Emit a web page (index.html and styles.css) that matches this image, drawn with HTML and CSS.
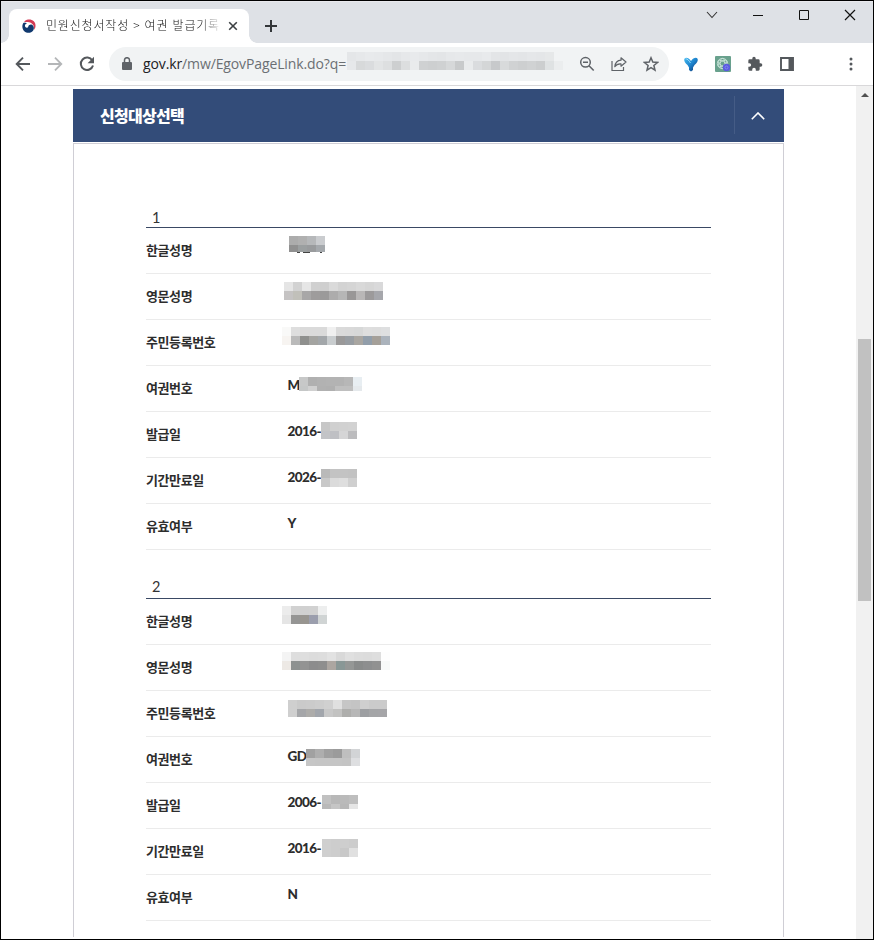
FILE: index.html
```
<!DOCTYPE html>
<html lang="ko">
<head>
<meta charset="utf-8">
<title>민원신청서작성</title>
<link rel="stylesheet" href="styles.css">
</head>
<body>
<div class="window">
  <header class="tabstrip">
    <div class="tab">
      <svg class="favicon" width="14" height="14" viewBox="0 0 14 14"><path d="M3 1.800C5.500-.2 9.500-.1 11.800 2.300c2.300 2.400 2.200 6.200.3 8.400C12.600 7 10.500 3.800 7 3.200 5.500 3 4 3 2 3.200Z" fill="#d23b56"/><path d="M1.600 3.700C-.3 6 0 10 2.300 12.200c2.700 2.400 7 2 8.900-.7 1.200-2 .8-4.600-1-5.600-1.700-.9-3.400.1-3.900 1.500-.4 1.200-1.700 1.700-2.700.8C2.300 7 3 5 5 4.200 3.800 3.700 2.600 3.600 1.600 3.700Z" fill="#10396e"/></svg>
      <span class="tab-title">민원신청서작성 &gt; 여권 발급기록</span>
      <svg class="tab-close" width="10" height="10" viewBox="0 0 10 10"><path d="M1.200 1.200l7.600 7.600M8.800 1.200L1.200 8.800" stroke="#3c4043" stroke-width="1.600"/></svg>
    </div>
    <svg class="new-tab" width="14" height="14" viewBox="0 0 14 14"><path d="M7 1v12M1 7h12" stroke="#333639" stroke-width="2"/></svg>
    <div class="controls">
      <svg width="12" height="12" viewBox="0 0 12 12"><path d="M1 3l5 5.500L11 3" fill="none" stroke="#333" stroke-width="1.100"/></svg>
      <svg width="12" height="12" viewBox="0 0 12 12"><path d="M1 6.500h10" stroke="#111" stroke-width="1"/></svg>
      <svg width="12" height="12" viewBox="0 0 12 12"><path d="M1.500 1.500h9v9h-9z" fill="none" stroke="#111"/></svg>
      <svg width="12" height="12" viewBox="0 0 12 12"><path d="M1 1l10 10M11 1L1 11" stroke="#111" stroke-width="1.200"/></svg>
    </div>
  </header>
  <div class="toolbar">
    <div class="nav">
      <svg width="16" height="16" viewBox="0 0 16 16"><path d="M15 8H2M8 1.700L1.700 8 8 14.300" fill="none" stroke="#54585c" stroke-width="1.900"/></svg>
      <svg width="16" height="16" viewBox="0 0 16 16"><path d="M1 8h13M8 1.700L14.300 8 8 14.300" fill="none" stroke="#b4b6b8" stroke-width="1.800"/></svg>
      <svg width="16" height="16" viewBox="0 0 16 16"><path d="M13.300 4.500A6.200 6.200 0 1 0 14 9.500" fill="none" stroke="#54585c" stroke-width="2"/><path d="M15 .8v6.400H8.600z" fill="#54585c"/></svg>
    </div>
    <div class="omnibox">
      <svg class="lock" width="10" height="13" viewBox="0 0 10 13"><path d="M1 5h8a1 1 0 0 1 1 1v6a1 1 0 0 1-1 1H1a1 1 0 0 1-1-1V6a1 1 0 0 1 1-1Z" fill="#5f6368"/><path d="M2.500 5.500V3a2.500 2.300 0 0 1 5 0v2.500" fill="none" stroke="#5f6368" stroke-width="1.500"/></svg>
      <span class="url"><b>gov.kr</b>/mw/EgovPageLink.do?q=</span>
      <div class="mosaic" data-rows="e4e6e8 e6e8ea e8eaec e7e9eb e5e7e9 e3e5e7 e6e8ea e8eaec e6e8ea e4e6e8 e3e5e7 e6e8ea e7e9eb e6e8ea e6e8ea e8eaec e3e5e7 e2e4e6 e4e6e8 e3e5e7 e5e7e9 e4e6e8 e6e8e9 f1f3f4|e6e8ea d7d9da dadcde e2e4e5 dddfe0 cdcfd0 dcdedf e9ebec cfd1d2 cdcfd0 cfd1d2 d6d8d9 c8cacb e9ebec dadcde d4d6d7 c7c9cb d8dadb d0d2d3 cdcfd0 d0d2d3 cccecf dfe2e3 ebedee"></div>
      <div class="actions">
        <svg width="16" height="16" viewBox="0 0 16 16"><circle cx="6.500" cy="6.300" r="4.800" fill="none" stroke="#5f6368" stroke-width="1.500"/><path d="M4 6.300h5M10 9.800l4.700 4.700" stroke="#5f6368" stroke-width="1.600"/></svg>
        <svg width="16" height="16" viewBox="0 0 16 16"><path d="M1 5v9.500h11.500v-3.500" fill="none" stroke="#5f6368" stroke-width="1.200"/><path d="M10 1.800L15 6l-5 4.200V7.900C7.500 7.700 5.300 8.500 3.800 10.700 4.200 7 6.300 4.500 10 4.200Z" fill="none" stroke="#5f6368" stroke-width="1.200" stroke-linejoin="round"/></svg>
        <svg width="16" height="16" viewBox="0 0 16 16"><path d="M8 1.800l1.800 4.300 4.700.4-3.600 3 1.100 4.600L8 11.700l-4 2.400 1.100-4.600-3.600-3 4.700-.4z" fill="none" stroke="#5f6368" stroke-width="1.500"/></svg>
      </div>
    </div>
    <div class="extensions">
      <svg width="16" height="16" viewBox="0 0 16 16"><defs><linearGradient id="blue" x2="1" y2="1"><stop stop-color="#43b9ef"/><stop offset=".5" stop-color="#1d83cd"/><stop offset="1" stop-color="#0a2b68"/></linearGradient></defs><path d="M1.300 3C2.500.8 5.500 1.500 8 5 10.500 1.500 13.500.8 14.700 3c.5 2.500-1.200 4.300-3.200 6L10 11.500V14l-2 1.500L6 14v-2.500L4.500 9C2.500 7.300.8 5.500 1.300 3Z" fill="url(#blue)"/><path d="M2.500 2.800C4.500 2.800 6 4.500 7.500 7" fill="none" stroke="#9bdcff" stroke-width="1"/></svg>
      <svg width="16" height="16" viewBox="0 0 16 16"><rect width="16" height="16" rx="1" fill="#69a18d"/><g fill="none" stroke="#d9eee5" stroke-width=".7"><circle cx="7.500" cy="7.500" r="5.200"/><ellipse cx="7.500" cy="7.500" rx="2.300" ry="5"/><ellipse cx="7.500" cy="7.500" rx="2.300" ry="5" transform="rotate(60 7.500 7.500)"/><ellipse cx="7.500" cy="7.500" rx="2.300" ry="5" transform="rotate(120 7.500 7.500)"/></g><circle cx="11.500" cy="11.500" r="3.700" fill="#5b5be0"/><circle cx="11.500" cy="11.500" r="1.500" fill="none" stroke="#8286f0"/></svg>
      <svg width="16" height="16" viewBox="0 0 24 24"><path d="M20.500 11H19V7a2 2 0 0 0-2-2h-4V3.500a2.500 2.500 0 0 0-5 0V5H4a2 2 0 0 0-2 2v3.800h1.500a2.700 2.700 0 0 1 0 5.400H2V20a2 2 0 0 0 2 2h3.800v-1.500a2.700 2.700 0 0 1 5.400 0V22H17a2 2 0 0 0 2-2v-4h1.500a2.500 2.500 0 0 0 0-5Z" fill="#54585c"/></svg>
      <svg width="16" height="16" viewBox="0 0 16 16"><path d="M2 2h12v12H2z" fill="none" stroke="#54585c" stroke-width="1.900"/><path d="M9.500 2H14v12H9.500z" fill="#54585c"/></svg>
    </div>
    <svg class="more" width="4" height="14" viewBox="0 0 4 14"><g fill="#54585c"><circle cx="2" cy="2" r="1.500"/><circle cx="2" cy="7" r="1.500"/><circle cx="2" cy="12" r="1.500"/></g></svg>
  </div>
  <div class="viewport">
    <main class="panel">
      <div class="panel-head">
        <h1>신청대상선택</h1>
        <div class="toggle"><svg width="14" height="8" viewBox="0 0 14 8"><path d="M.8 7.200L7 1l6.200 6.200" fill="none" stroke="#fff" stroke-width="1.600"/></svg></div>
      </div>
      <div class="panel-body">
        <section>
          <h2>1</h2>
          <dl>
            <div class="row"><dt>한글성명</dt><dd></dd><div class="mosaic k1" data-rows="acacac b0b0b0 b6b8ba cacccf|909090 9b9fa0 999b9d a5a9ad"></div><svg class="tails" width="27" height="2" viewBox="0 0 27 2"><path d="M1 .5h3M7 .5h7M24 .5h2" stroke="#444"/></svg></div>
            <div class="row"><dt>영문성명</dt><dd></dd><div class="mosaic k2" data-rows="e5e5e5 d2d2d2 e6e6e6 d0d0d0 cfcfcf dadada d3d3d3 d5d5d5 d9d9d9 d6d6d6 d9d9da|c5c3c3 c1c0ba a8a7a7 9e9c9c 9b9a9a adacac b6b6b6 999797 b9b7b7 9c9a9b a6a7ac"></div></div>
            <div class="row"><dt>주민등록번호</dt><dd></dd><div class="mosaic k3" data-rows="f9f9f8 dedede dadada dadada dadada f0f0f0 dadada d9d9d9 d7d8d8 dedede dddddd dedfe0|f7f4f1 bababa 8f908e a4a4a1 a3a7aa c9cdcf 9a9999 989da2 a9a6a1 929eaa a5a099 abb3bc"></div></div>
            <div class="row"><dt>여권번호</dt><dd>M</dd><div class="mosaic k4" data-rows="c7c8c8 b0b0b0 b2b2b2 b3b3b3 b3b3b3 b7b7b7 e8eef2|c5c7c7 d0d0d0 b1b1b1 b0b0b0 bfbfbf bfbfbf e5e9ec"></div></div>
            <div class="row"><dt>발급일</dt><dd>2016-</dd><div class="mosaic k5" data-rows="c7c7c7 d0d0d0 d1d1d1 d2d2d2|c3c4c7 bfc0c4 d5d5d6 bcbcbe"></div></div>
            <div class="row"><dt>기간만료일</dt><dd>2026-</dd><div class="mosaic k6" data-rows="b9b9b9 c3c3c3 c3c3c3 c2c2c2|c8c8c8 dbdbdb dedede cfcfcf"></div></div>
            <div class="row"><dt>유효여부</dt><dd>Y</dd></div>
          </dl>
        </section>
        <section>
          <h2>2</h2>
          <dl>
            <div class="row"><dt>한글성명</dt><dd></dd><div class="mosaic s1" data-rows="ececec d1d1d1 d0d0d0 d1d1d1 edeeee|e5e5e5 959594 989590 9b9ead d0d4d4"></div></div>
            <div class="row"><dt>영문성명</dt><dd></dd><div class="mosaic s2" data-rows="f4f4f4 dedede dedede dcdcdc dddddd e2e2e2 d9d9d9 e0e0e0 dddddd dcdcdc dedede fefefe|ede9e5 8d9190 939393 8c8c8d 8e8e8e aca6a1 899796 959796 898b8b 8d8e8f 919191 f8faf9"></div></div>
            <div class="row"><dt>주민등록번호</dt><dd></dd><div class="mosaic s3" data-rows="cfcfcf cacaca cbcbcb cdcdcd d0d0d0 e0e0e0 c6c6c6 c4c4c4 cfcfcf cbcbcb cbcbcb|cfcfcf a5a6a9 adacaa a2a6ac c8c8c8 c2c2c1 aeaeac b7b7b7 9d9fa2 a4a5a7 a5a5a8"></div></div>
            <div class="row"><dt>여권번호</dt><dd>GD</dd><div class="mosaic s4" data-rows="a1a1a1 aeaeae a0a0a0 9b9b9b bfbfbf d2d4d6|c6c6c6 c5c5c5 c5c5c5 c5c5c5 c4c4c4 dedfe1"></div></div>
            <div class="row"><dt>발급일</dt><dd>2006-</dd><div class="mosaic s5" data-rows="c1c1c1 b8b8b8 bababa bebebe|b9b9b9 c5c5c5 b8b8b8 e5e5e5"></div></div>
            <div class="row"><dt>기간만료일</dt><dd>2016-</dd><div class="mosaic s6" data-rows="cfcfcf cdcdcd cecece cccccc|cfcfcf cdcdcd c8c8c8 e0e0e0"></div></div>
            <div class="row"><dt>유효여부</dt><dd>N</dd></div>
          </dl>
        </section>
      </div>
    </main>
    <div class="scrollbar"><div class="arrow"></div><div class="thumb"></div></div>
  </div>
</div>
<script src="script.js"></script>
</body>
</html>
```
FILE: script.js
```
// Fills each redaction block with its grid of coloured cells.
document.querySelectorAll('.mosaic').forEach(function (block) {
  block.dataset.rows.split('|').forEach(function (row) {
    var line = document.createElement('div');
    line.className = 'mosaic-row';
    row.split(' ').forEach(function (color) {
      var cell = document.createElement('i');
      cell.style.background = '#' + color;
      line.appendChild(cell);
    });
    block.appendChild(line);
  });
});
```
FILE: styles.css
```
* { box-sizing: border-box; }
body { margin: 0; background: #fff; font-family: Lato, "Noto Sans CJK KR", sans-serif; }
svg { display: block; flex: none; }
.window { height: 940px; border: 1px solid #000; display: flex; flex-direction: column; overflow: hidden; }
.tabstrip { height: 42px; flex: none; background: #dee1e6; display: flex; align-items: flex-end; padding-left: 8px; box-shadow: inset 0 1px #e9e9ed; }
.tab { width: 240px; height: 34px; background: #fff; border-radius: 8px 8px 0 0; display: flex; align-items: center; padding: 0 11px 0 13px; position: relative; }
.tab::before, .tab::after { content: ""; position: absolute; bottom: 0; width: 8px; height: 8px; }
.tab::before { left: -8px; background: radial-gradient(circle at 0 0, transparent 7.5px, #fff 8px); }
.tab::after { right: -8px; background: radial-gradient(circle at 100% 0, transparent 7.5px, #fff 8px); }
.tab-title { margin: -2px 0 0 10px; width: 174px; overflow: hidden; white-space: nowrap; font: 300 12px/18px "Noto Sans CJK KR", sans-serif; letter-spacing: .82px; color: #111; -webkit-mask-image: linear-gradient(to right, #000 155px, transparent 176px); mask-image: linear-gradient(to right, #000 155px, transparent 176px); }
.tab-close { margin-left: 8px; }
.new-tab { margin: 0 0 10px 15px; }
.controls { margin: 0 17px 22px auto; display: flex; gap: 34px; }
.toolbar { height: 43px; flex: none; display: flex; align-items: center; border-bottom: 1px solid #d9d8da; padding: 0 20px 0 14px; background: #fff; }
.nav { display: flex; gap: 16px; }
.omnibox { width: 560px; height: 34px; margin-left: 14px; border-radius: 17px; background: #f1f3f4; display: flex; align-items: center; padding: 0 10px 0 13px; }
.lock { margin-bottom: 2px; }
.url { margin-left: 11px; width: 204px; white-space: nowrap; font: 14px/20px "Open Sans", sans-serif; letter-spacing: -.12px; color: #6b6f73; }
.url b { font-weight: 400; color: #202124; }
.omnibox .mosaic { margin: -6px 0 0 0; }
.actions { display: flex; gap: 16px; margin-left: auto; }
.extensions { display: flex; gap: 16px; margin-left: 14px; }
.more { margin-left: auto; }
.viewport { flex: 1; min-height: 0; display: flex; justify-content: space-between; }
.panel { width: 711px; margin: 3px 0 0 72px; display: flex; flex-direction: column; }
.panel-head { height: 53px; flex: none; background: #334c79; display: flex; align-items: center; justify-content: space-between; padding: 0 0 1px 27px; }
h1 { margin: 0; color: #fff; font: 900 16px/24px "Noto Sans CJK KR", sans-serif; letter-spacing: -.7px; }
.toggle { width: 50px; height: 38px; border-left: 1px solid #455c86; display: flex; align-items: center; justify-content: center; padding: 2px 4px 0 0; }
.panel-body { flex: 1; margin: 1px 0 2px; border: 1px solid #cfced5; border-bottom: 0; padding: 62px 72px 0; }
section + section { margin-top: 25px; }
h2 { margin: 0; height: 24px; padding-left: 6px; border-bottom: 1px solid #3a4964; font: 400 14.5px/24px Lato, sans-serif; color: #333; }
section:first-child h2 { height: 22px; line-height: 23px; }
dl { margin: 0; }
.row { height: 46px; border-bottom: 1px solid #ebebeb; display: flex; position: relative; color: #2d2d2d; }
dt { width: 141.500px; font: 700 13px/20px "Noto Sans CJK KR", sans-serif; letter-spacing: -.4px; padding-top: 12px; white-space: nowrap; }
dd { margin: 0; font: 900 13.5px/20px Lato, sans-serif; letter-spacing: -.6px; padding-top: 9px; }
.mosaic { --top: 9px; --bottom: 9px; flex: none; }
.mosaic-row { display: flex; height: var(--bottom); }
.mosaic-row:first-child { height: var(--top); }
.mosaic-row i { width: 9px; height: 100%; }
/* Redactions lie over the cell values. */
.row .mosaic { position: absolute; }
.row .k1 { left: 143px; top: 8px; --bottom: 7px; }
.tails { position: absolute; left: 150px; top: 24px; }
.row .k2 { left: 138px; top: 8px; }
.row .k3 { left: 136px; top: 7px; }
.row .k4 { left: 153px; top: 11px; --bottom: 5px; }
.row .k5 { left: 175px; top: 10px; --bottom: 8px; }
.row .k6 { left: 175px; top: 11px; }
.row .s1 { left: 136px; top: 7px; }
.row .s2 { left: 136px; top: 7px; }
.row .s3 { left: 142px; top: 9px; --bottom: 8px; }
.row .s4 { left: 160px; top: 12px; --bottom: 8px; }
.row .s5 { left: 176px; top: 12px; --bottom: 5px; }
.row .s6 { left: 176px; top: 10px; }
.scrollbar { width: 17px; background: #f1f1f1; padding: 7px 2px 0; }
.arrow { width: 8px; height: 4px; margin-left: 3px; background: #505050; clip-path: polygon(50% 0, 100% 100%, 0 100%); }
.thumb { width: 13px; height: 262px; margin-top: 242px; background: #c1c1c1; }
```
